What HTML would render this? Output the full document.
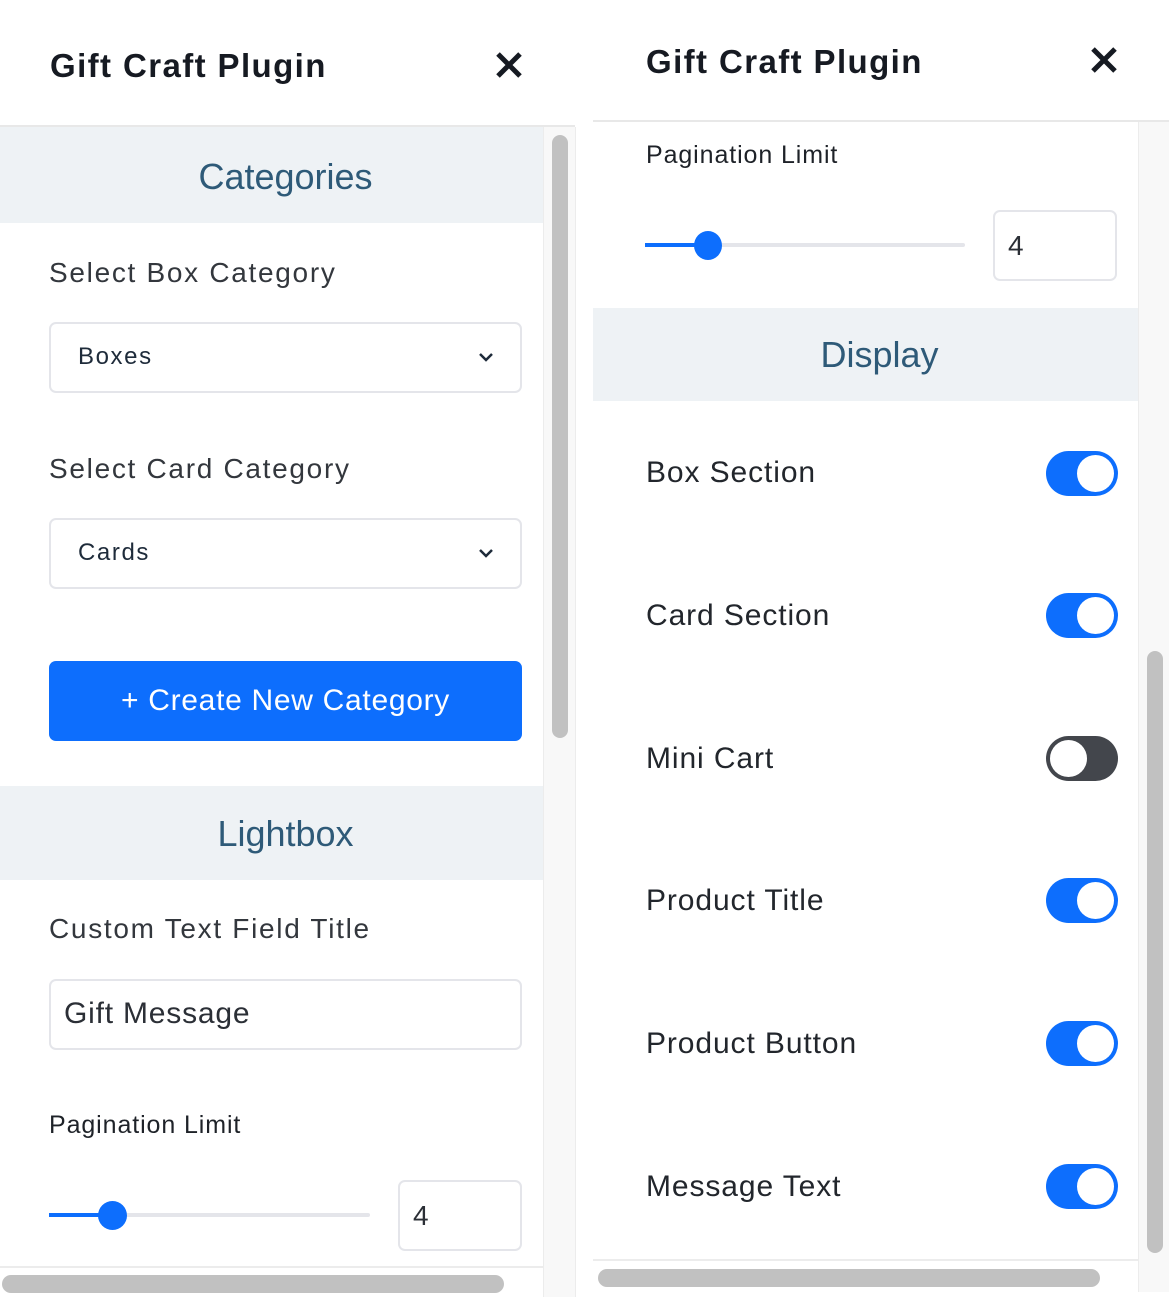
<!DOCTYPE html>
<html><head><meta charset="utf-8"><style>
*{box-sizing:border-box;margin:0;padding:0}
body{width:1169px;height:1298px;background:#fff;position:relative;overflow:hidden;font-family:"Liberation Sans",Arial,sans-serif;color:#2b2f36}
.a{position:absolute;white-space:nowrap}
.title{font-size:33px;font-weight:bold;color:#161a22;line-height:40px;letter-spacing:1.4px}
.band{position:absolute;background:#eef2f5;color:#2e5a78;font-size:36px;text-align:center;padding-left:28px}
.lbl{font-size:28px;color:#33373d;line-height:34px;letter-spacing:1.7px}
.lbl2{font-size:25px;color:#1e2228;line-height:30px;letter-spacing:0.9px}
.box{position:absolute;border:2px solid #e4e5ea;border-radius:7px;background:#fff}
.tog{position:absolute;width:72px;height:45px;border-radius:23px;background:#0d6efd}
.tog::after{content:"";position:absolute;right:4px;top:4px;width:37px;height:37px;border-radius:50%;background:#fff}
.tog.off{background:#43464c}
.tog.off::after{right:auto;left:4px}
.tl{font-size:30px;color:#22262c;line-height:36px;letter-spacing:0.9px}
</style></head><body>
<!-- left panel -->
<div class="a title" style="left:50px;top:46px">Gift Craft Plugin</div>
<svg class="a" style="left:495px;top:51px" width="28" height="28" viewBox="0 0 28 28"><path d="M3 3L25 25M25 3L3 25" stroke="#161a22" stroke-width="5"/></svg>
<div class="a" style="left:0;top:125px;width:575px;height:2px;background:#e8e8e8"></div>
<div class="a" style="left:543px;top:127px;width:33px;height:1170px;background:#f8f8f8;border-left:1px solid #ececec;border-right:1px solid #ececec"></div>
<div class="a" style="left:552px;top:135px;width:16px;height:603px;border-radius:8px;background:#c1c1c1"></div>
<div class="band" style="left:0;top:127px;width:543px;height:96px;line-height:100px">Categories</div>
<div class="a lbl" style="left:49px;top:256px">Select Box Category</div>
<div class="box" style="left:49px;top:322px;width:473px;height:71px"></div>
<div class="a" style="left:78px;top:342px;font-size:24px;color:#1e2b3a;line-height:30px;letter-spacing:1.6px">Boxes</div>
<svg class="a" style="left:478px;top:351px" width="16" height="12" viewBox="0 0 16 12"><path d="M2 3L8 9L14 3" fill="none" stroke="#1e2b3a" stroke-width="2.5"/></svg>
<div class="a lbl" style="left:49px;top:452px">Select Card Category</div>
<div class="box" style="left:49px;top:518px;width:473px;height:71px"></div>
<div class="a" style="left:78px;top:538px;font-size:24px;color:#1e2b3a;line-height:30px;letter-spacing:1.6px">Cards</div>
<svg class="a" style="left:478px;top:547px" width="16" height="12" viewBox="0 0 16 12"><path d="M2 3L8 9L14 3" fill="none" stroke="#1e2b3a" stroke-width="2.5"/></svg>
<div class="a" style="left:49px;top:661px;width:473px;height:80px;background:#0d6efd;border-radius:7px;color:#fff;font-size:30px;line-height:80px;text-align:center;letter-spacing:0.7px">+ Create New Category</div>
<div class="band" style="left:0;top:786px;width:543px;height:94px;line-height:96px">Lightbox</div>
<div class="a lbl" style="left:49px;top:912px">Custom Text Field Title</div>
<div class="box" style="left:49px;top:979px;width:473px;height:71px"></div>
<div class="a" style="left:64px;top:996px;font-size:30px;color:#2b2f36;line-height:36px;letter-spacing:0.8px">Gift Message</div>
<div class="a lbl2" style="left:49px;top:1110px">Pagination Limit</div>
<div class="a" style="left:49px;top:1213px;width:321px;height:4px;background:#e4e5ea;border-radius:2px"></div>
<div class="a" style="left:49px;top:1213px;width:63px;height:4px;background:#0d6efd"></div>
<div class="a" style="left:98px;top:1201px;width:29px;height:29px;border-radius:50%;background:#0d6efd"></div>
<div class="box" style="left:398px;top:1180px;width:124px;height:71px"></div>
<div class="a" style="left:413px;top:1200px;font-size:28px;line-height:32px">4</div>
<div class="a" style="left:0;top:1266px;width:543px;height:2px;background:#ececec"></div>
<div class="a" style="left:2px;top:1275px;width:502px;height:18px;border-radius:9px;background:#c1c1c1"></div>

<!-- right panel -->
<div class="a title" style="left:646px;top:42px">Gift Craft Plugin</div>
<svg class="a" style="left:1090px;top:46px" width="28" height="28" viewBox="0 0 28 28"><path d="M3 3L25 25M25 3L3 25" stroke="#161a22" stroke-width="5"/></svg>
<div class="a" style="left:593px;top:120px;width:576px;height:2px;background:#e8e8e8"></div>
<div class="a" style="left:1138px;top:122px;width:31px;height:1170px;background:#f8f8f8;border-left:1px solid #ececec"></div>
<div class="a" style="left:1147px;top:651px;width:16px;height:602px;border-radius:8px;background:#c1c1c1"></div>
<div class="a lbl2" style="left:646px;top:140px">Pagination Limit</div>
<div class="a" style="left:645px;top:243px;width:320px;height:4px;background:#e4e5ea;border-radius:2px"></div>
<div class="a" style="left:645px;top:243px;width:63px;height:4px;background:#0d6efd"></div>
<div class="a" style="left:694px;top:231px;width:28px;height:29px;border-radius:50%;background:#0d6efd"></div>
<div class="box" style="left:993px;top:210px;width:124px;height:71px"></div>
<div class="a" style="left:1008px;top:230px;font-size:28px;line-height:32px">4</div>
<div class="band" style="left:593px;top:308px;width:545px;height:93px;line-height:94px">Display</div>
<div class="a tl" style="left:646px;top:455px">Box Section</div><div class="tog" style="left:1046px;top:451px"></div>
<div class="a tl" style="left:646px;top:598px">Card Section</div><div class="tog" style="left:1046px;top:593px"></div>
<div class="a tl" style="left:646px;top:741px">Mini Cart</div><div class="tog off" style="left:1046px;top:736px"></div>
<div class="a tl" style="left:646px;top:883px">Product Title</div><div class="tog" style="left:1046px;top:878px"></div>
<div class="a tl" style="left:646px;top:1026px">Product Button</div><div class="tog" style="left:1046px;top:1021px"></div>
<div class="a tl" style="left:646px;top:1169px">Message Text</div><div class="tog" style="left:1046px;top:1164px"></div>
<div class="a" style="left:593px;top:1259px;width:545px;height:2px;background:#ececec"></div>
<div class="a" style="left:598px;top:1269px;width:502px;height:18px;border-radius:9px;background:#c1c1c1"></div>
</body></html>
